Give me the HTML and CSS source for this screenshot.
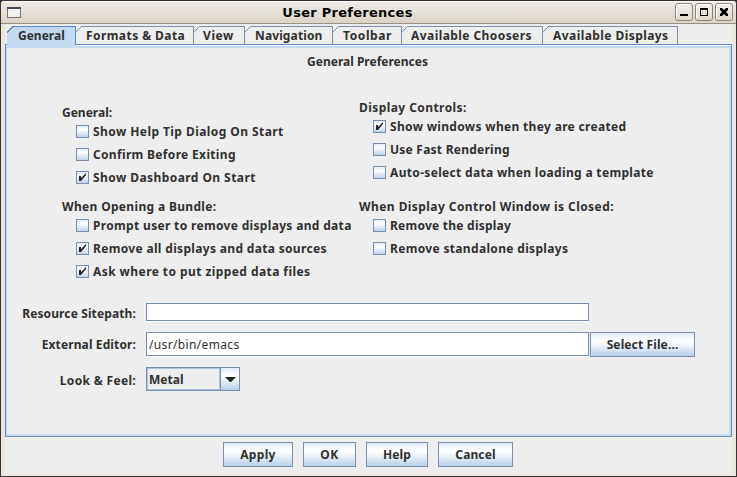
FILE: index.html
```html
<!DOCTYPE html>
<html lang="en">
<head>
<meta charset="utf-8">
<title>User Preferences</title>
<link rel="stylesheet" href="styles.css">
</head>
<body>
<div class="window">
  <header class="titlebar">
    <svg class="app-icon" width="14" height="11" viewBox="0 0 14 11"><rect x=".5" y=".5" width="13" height="10" fill="#f2f1ef" stroke="#76756f"/><rect width="14" height="2" fill="#3c4c5f"/></svg>
    <h1>User Preferences</h1>
    <div class="controls">
      <button aria-label="Minimize"><svg width="16" height="16" viewBox="0 0 16 16"><path d="M4 10h8v2H4z"/></svg></button>
      <button aria-label="Maximize"><svg width="16" height="16" viewBox="0 0 16 16"><path fill-rule="evenodd" d="M4 4h8v8H4zM5 6v5h6V6z"/></svg></button>
      <button aria-label="Close"><svg width="16" height="16" viewBox="0 0 16 16"><path d="M4 4h2l2 2 2-2h2v2l-2 2 2 2v2h-2l-2-2-2 2H4v-2l2-2-2-2z"/></svg></button>
    </div>
  </header>
  <main class="client">
    <nav class="tabs">
      <span class="tab active t1">General</span>
      <span class="tab t2"><svg class="cut" width="6" height="6" viewBox="0 0 6 6"><path d="M0 0h6L0 6z"/><path class="edge" d="M.2 5.8l5.6-5.6"/></svg><span class="ls4">Formats &amp; Data</span></span>
      <span class="tab t3"><svg class="cut" width="6" height="6" viewBox="0 0 6 6"><path d="M0 0h6L0 6z"/><path class="edge" d="M.2 5.8l5.6-5.6"/></svg><span class="ls5">View</span></span>
      <span class="tab t4"><svg class="cut" width="6" height="6" viewBox="0 0 6 6"><path d="M0 0h6L0 6z"/><path class="edge" d="M.2 5.8l5.6-5.6"/></svg><span class="ls1">Navigation</span></span>
      <span class="tab t5"><svg class="cut" width="6" height="6" viewBox="0 0 6 6"><path d="M0 0h6L0 6z"/><path class="edge" d="M.2 5.8l5.6-5.6"/></svg><span class="ls5">Toolbar</span></span>
      <span class="tab t6"><svg class="cut" width="6" height="6" viewBox="0 0 6 6"><path d="M0 0h6L0 6z"/><path class="edge" d="M.2 5.8l5.6-5.6"/></svg><span class="ls4">Available Choosers</span></span>
      <span class="tab t7"><svg class="cut" width="6" height="6" viewBox="0 0 6 6"><path d="M0 0h6L0 6z"/><path class="edge" d="M.2 5.8l5.6-5.6"/></svg><span class="ls4">Available Displays</span></span>
    </nav>
    <section class="panel">
      <h2>General Preferences</h2>
      <div class="groups">
        <div class="left">
          <h3>General:</h3>
          <label class="ls4"><i class="box"></i>Show Help Tip Dialog On Start</label>
          <label class="ls3"><i class="box"></i>Confirm Before Exiting</label>
          <label class="ls4"><i class="box"><svg viewBox="0 0 11 11"><path d="M2 4h2v2L9 1v2L4 9H2z"/></svg></i>Show Dashboard On Start</label>
          <h3 class="second ls3">When Opening a Bundle:</h3>
          <label class="ls3"><i class="box"></i>Prompt user to remove displays and data</label>
          <label class="ls3"><i class="box"><svg viewBox="0 0 11 11"><path d="M2 4h2v2L9 1v2L4 9H2z"/></svg></i>Remove all displays and data sources</label>
          <label class="ls4"><i class="box"><svg viewBox="0 0 11 11"><path d="M2 4h2v2L9 1v2L4 9H2z"/></svg></i>Ask where to put zipped data files</label>
        </div>
        <div class="right">
          <h3 class="ls4">Display Controls:</h3>
          <label class="ls3"><i class="box"><svg viewBox="0 0 11 11"><path d="M2 4h2v2L9 1v2L4 9H2z"/></svg></i>Show windows when they are created</label>
          <label class="ls2"><i class="box"></i>Use Fast Rendering</label>
          <label class="ls3"><i class="box"></i>Auto-select data when loading a template</label>
          <h3 class="second ls4">When Display Control Window is Closed:</h3>
          <label class="ls2"><i class="box"></i>Remove the display</label>
          <label class="ls3"><i class="box"></i>Remove standalone displays</label>
        </div>
      </div>
      <div class="fields">
        <div class="row sitepath"><span class="name ls1">Resource Sitepath:</span><span class="input"></span></div>
        <div class="row editor"><span class="name ls1">External Editor:</span><span class="input">/usr/bin/emacs</span><button class="btn select ls1">Select File...</button></div>
        <div class="row look"><span class="name ls3">Look &amp; Feel:</span><span class="combo"><span class="value">Metal</span><span class="arrow"><svg width="11" height="5" viewBox="0 0 11 5"><path d="M0 0h11L6 5H5z"/></svg></span></span></div>
      </div>
    </section>
    <footer>
      <button class="btn apply ls3">Apply</button>
      <button class="btn ok ls5">OK</button>
      <button class="btn help ls1">Help</button>
      <button class="btn cancel ls1">Cancel</button>
    </footer>
  </main>
</div>
</body>
</html>
```
FILE: styles.css
```css
* { box-sizing: border-box; }
body {
  margin: 0;
  font: bold 12px/16px "Noto Sans", "Liberation Sans", sans-serif;
  color: #303030;
  background: #332c2c;
}
h1, h2, h3 { margin: 0; font: inherit; }
.ls1 { letter-spacing: .12px; }
.ls2 { letter-spacing: .24px; }
.ls3 { letter-spacing: .33px; }
.ls4 { letter-spacing: .43px; }
.ls5 { letter-spacing: .6px; }

.window {
  width: 737px;
  height: 477px;
  border: 1px solid #3a3333;
  border-radius: 4px 4px 0 0;
  background: #ece6df;
  overflow: hidden;
}
.titlebar {
  height: 23px;
  display: grid;
  grid-template-columns: 34px 1fr 80px;
  align-items: center;
  padding: 0 3px 0 6px;
  background: linear-gradient(#fdfcfb 0, #ede8e3 2px, #e6e0d9 11px, #dcd3c8 22px);
  border-bottom: 1px solid #9b9082;
}
.titlebar h1 {
  font: bold 13px/20px "DejaVu Sans", sans-serif;
  letter-spacing: .27px;
  text-align: center;
  color: #000;
  padding: 2px 0 0 1px;
}
.app-icon { display: block; }
.controls { display: flex; gap: 2px; justify-content: flex-end; }
.controls button {
  width: 18px;
  height: 18px;
  padding: 0;
  border: 1px solid #8f8477;
  border-radius: 3px;
  background: linear-gradient(#f3f0ec, #ded7ce);
  box-shadow: inset 1px 1px #fff;
}
.controls svg { display: block; }

.client {
  height: 450px;
  margin: 0 4px 2px;
  padding-top: 2px;
  background: #eee;
}
.tabs { display: flex; height: 18px; padding-left: 2px; }
.tab {
  position: relative;
  height: 18px;
  padding-left: 10px;
  border: solid #7a8fae;
  border-width: 1px 1px 0 0;
  line-height: 18px;
  white-space: nowrap;
}
.tab.active {
  height: 21px;
  z-index: 1;
  border: 0;
  background: linear-gradient(#5b87cc, #5b87cc) 5px 0 / 100% 1px no-repeat, linear-gradient(#5b87cc, #5b87cc) 100% 0 / 1px 19px no-repeat, linear-gradient(135deg, #eee 4px, #6382bf 4px, #6382bf 5px, #c4daf0 5px);
  padding: 1px 0 0 11px;
}
.t1 { width: 69px; }
.t2 { width: 118px; }
.t3 { width: 51px; padding-left: 9px; }
.t4 { width: 88px; }
.t5 { width: 69px; }
.t6 { width: 141px; padding-left: 9px; }
.t7 { width: 135px; }
.cut { position: absolute; left: 0; top: -1px; fill: #eee; }
.cut .edge { fill: none; stroke: #7a8fae; }

.panel {
  height: 393px;
  width: 727px;
  border: 1px solid #7a8fae;
  border-color: #5b87cc #5b87cc #7a8fae;
  box-shadow: inset 0 1px #fff, inset 1px 0 #c4daf0, inset -2px -2px #c4daf0, inset 0 3px #c4daf0;
}
.panel h2 { padding: 9px 2px 0 0; text-align: center; line-height: 16px; }
.groups {
  display: grid;
  grid-template-columns: 297px 1fr;
  padding: 30px 0 0 56px;
  white-space: nowrap;
}
.left { padding-top: 5px; }
.left h3, .right h3 { height: 16px; }
.groups label { display: flex; align-items: center; height: 23px; padding-left: 14px; }
.left > h3 + label, .right > h3 + label { margin-top: -1px; }
.left .second { margin-top: 10px; }
.right .second { margin-top: 15px; }
.box {
  width: 13px;
  height: 13px;
  margin-right: 4px;
  border: 1px solid #7a8fae;
  background: linear-gradient(#e3edf7, #fdfeff 35%, #bdd3e8);
}
.box svg { display: block; width: 11px; height: 11px; fill: #252525; }

.fields { display: grid; row-gap: 11px; margin-top: 20px; }
.row { display: flex; align-items: center; }
.name { width: 130px; margin-right: 10px; text-align: right; }
.sitepath .name, .look .name { padding-top: 2px; margin-bottom: -2px; }
.sitepath { height: 18px; }
.input {
  width: 443px;
  height: 18px;
  border: 1px solid #7a8fae;
  background: #fff;
  box-shadow: 0 1px #fff;
  font-weight: normal;
  letter-spacing: .35px;
  line-height: 23px;
  padding-left: 2px;
}
.editor .input { height: 24px; margin-bottom: 1px; }
.look { margin-top: -1px; }
.btn {
  height: 25px;
  padding: 0;
  border: 1px solid #7a8fae;
  background: linear-gradient(#dfeaf6, #fff 32%, #fafcfe 42%, #b9d0e7);
  font-family: inherit;
  font-size: 12px;
  font-weight: bold;
  line-height: 16px;
  color: #303030;
}
.select { width: 105px; margin-left: 1px; }
.combo {
  display: flex;
  width: 94px;
  height: 24px;
  border: 1px solid #7a8fae;
}
.value { width: 73px; border: 1px solid #a9c6e2; padding-left: 1px; line-height: 22px; }
.arrow {
  flex: 1;
  display: grid;
  place-items: center;
  border-left: 1px solid #7a8fae;
  background: linear-gradient(#e3edf7, #fff 35%, #b9d0e7);
  fill: #252525;
}
footer { display: flex; gap: 10px; margin: 5px 0 0 218px; }
.apply { width: 70px; }
.ok { width: 53px; }
.help { width: 62px; }
.cancel { width: 75px; }
```
